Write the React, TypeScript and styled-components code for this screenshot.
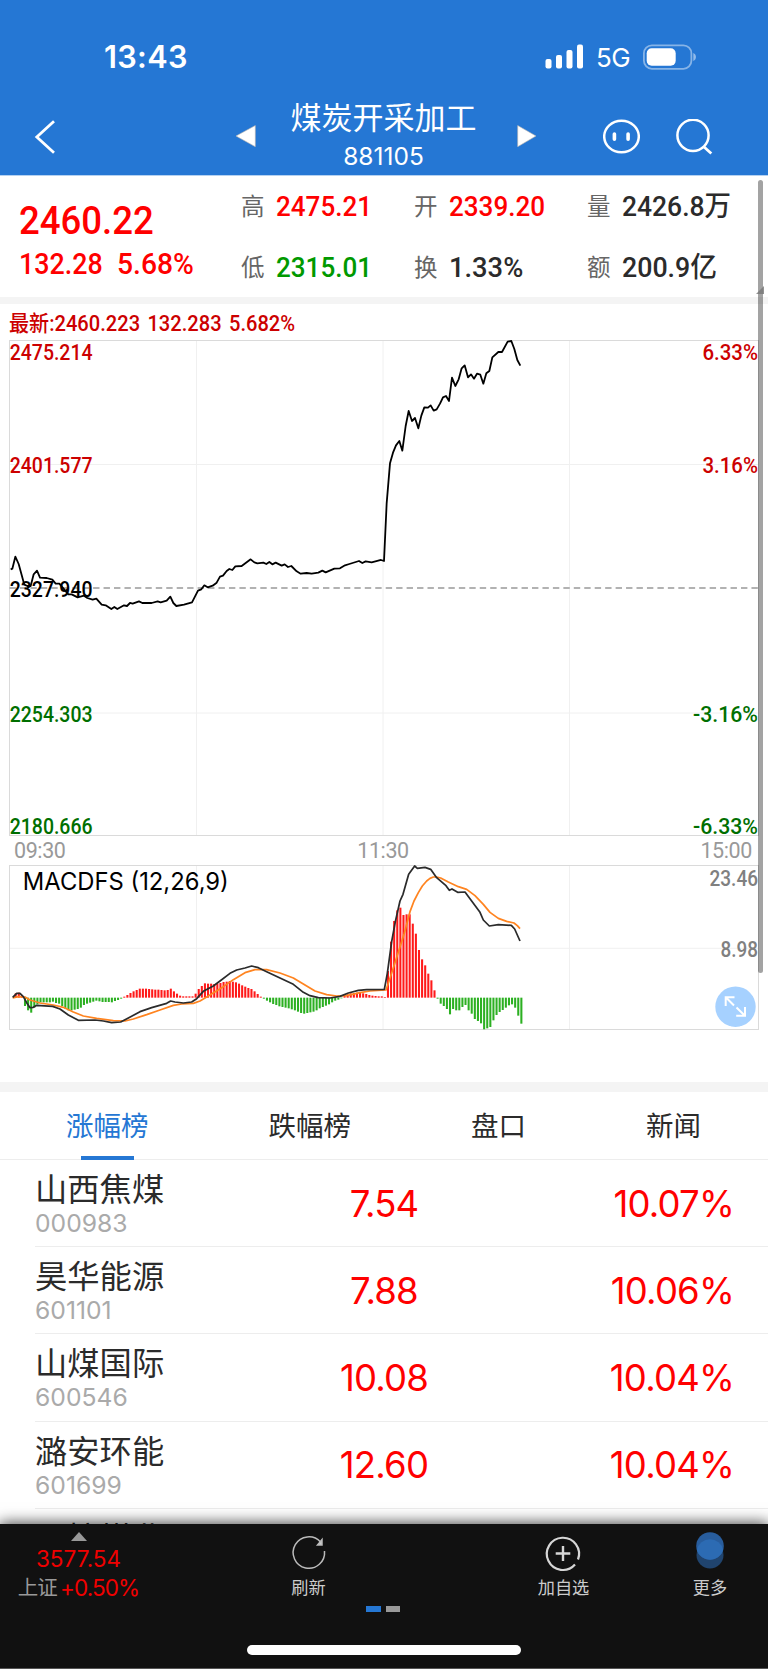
import React from "react";
import styled, { createGlobalStyle } from "styled-components";

const GlobalStyle = createGlobalStyle`
  * { box-sizing: border-box; }
  body { margin: 0; background: #fff; }
  svg { display: block; }
`;

const RED = "#ff0000";
const BLUE = "#2577d4";

const Page = styled.main`
  position: relative;
  display: flex;
  flex-direction: column;
  width: 768px;
  height: 1669px;
  overflow: hidden;
  background: #fff;
  color: #2b2b2b;
  font-family: Inter, "Noto Sans CJK SC", sans-serif;
`;

const Header = styled.header`
  flex: none;
  height: 176px;
  background: ${BLUE};
  border-bottom: 1px solid #b4d1f1;
  color: #fff;
`;

const StatusBar = styled.div`
  display: flex;
  align-items: center;
  height: 100px;
  padding: 13px 71px 0 104px;
`;

const Clock = styled.span`
  flex: 1;
  font-size: 30.7px;
  font-weight: 600;
  letter-spacing: 0.3px;
`;

const Network = styled.span`
  flex: none;
  width: 59px;
  padding: 2px 0 0 12px;
  font-size: 26px;
  line-height: 30px;
  letter-spacing: -0.6px;
`;

const Nav = styled.nav`
  display: grid;
  grid-template-columns: 236px 20px 261px 19px 1fr;
  align-items: center;
  height: 75px;
`;

const Back = styled.div`
  padding: 0 0 1px 34px;
`;

const Arrow = styled.svg`
  margin-bottom: 3px;
`;

const Title = styled.div`
  padding-right: 6px;
  text-align: center;
`;

const TitleName = styled.div`
  font-size: 31px;
  line-height: 36px;
  font-weight: 400;
  white-space: nowrap;
`;

const TitleCode = styled.div`
  padding-top: 1px;
  font-size: 24.5px;
  line-height: 38px;
`;

const NavActions = styled.div`
  display: flex;
  align-items: center;
  gap: 36px;
  padding: 0 0 1px 67px;
`;

const Quote = styled.section`
  flex: none;
  display: flex;
  height: 121px;
  font-family: Roboto, "Noto Sans CJK SC", sans-serif;
  font-weight: 500;
`;

const PriceBox = styled.div`
  width: 241px;
  padding: 22px 0 0 19px;
  color: ${RED};
  white-space: nowrap;
`;

const Digits = styled.span<{ $squeeze: number }>`
  display: inline-block;
  transform: scaleX(${(p) => p.$squeeze});
  transform-origin: left center;
  white-space: pre;
`;

const Price = styled.div`
  font-size: 39.5px;
  line-height: 45px;
`;

const Change = styled.div`
  display: grid;
  grid-template-columns: 98px 1fr;
  font-size: 29px;
  line-height: 42px;
`;

const Stats = styled.div`
  display: grid;
  grid-template-columns: repeat(3, 173px);
  grid-template-rows: 61px 61px;
`;

const Stat = styled.div<{ $color: string }>`
  display: grid;
  grid-template-columns: 35px 1fr;
  align-items: center;
  font-size: 28px;
  line-height: 60px;
  color: ${(p) => p.$color};
  white-space: nowrap;
`;

const StatLabel = styled.span`
  color: #666;
  font-size: 23.5px;
  font-weight: 400;
`;

const Band = styled.div<{ $h: number }>`
  flex: none;
  height: ${(p) => p.$h}px;
  background: #f4f4f4;
`;

const Latest = styled.div`
  flex: none;
  height: 36px;
  padding: 0 0 0 9px;
  font-family: Roboto, "Noto Sans CJK SC", sans-serif;
  font-size: 21.5px;
  font-weight: 500;
  line-height: 39px;
  color: #cc0000;
  word-spacing: -1.4px;
`;

const ChartSvg = styled.svg`
  flex: none;
`;

const TimeAxis = styled.div`
  flex: none;
  display: flex;
  justify-content: space-between;
  height: 29px;
  padding: 0 16px 0 14px;
  font-family: Roboto, sans-serif;
  font-size: 21.5px;
  line-height: 30px;
  color: #999;
  letter-spacing: -0.4px;
`;

const MacdPanel = styled.section`
  flex: none;
  position: relative;
  height: 217px;
`;

const Expand = styled.div`
  position: absolute;
  left: 715px;
  top: 121px;
`;

const Tabs = styled.div`
  flex: none;
  display: flex;
  gap: 120px;
  height: 68px;
  padding-left: 66px;
  border-bottom: 1px solid #ededed;
`;

const Tab = styled.div<{ $active?: boolean }>`
  display: flex;
  flex-direction: column;
  align-items: center;
  font-size: 27.5px;
  line-height: 64px;
  height: 67px;
  padding-top: 2px;
  white-space: nowrap;
  color: ${(p) => (p.$active ? BLUE : "#2b2b2b")};
  &::after {
    content: "";
    flex: none;
    width: 53px;
    height: 4px;
    margin-top: -2px;
    background: ${(p) => (p.$active ? BLUE : "transparent")};
  }
`;

const List = styled.section`
  flex: 1;
  min-height: 0;
  overflow: hidden;
`;

const Row = styled.div`
  display: grid;
  grid-template-columns: 249px 200px 250px;
  align-items: center;
  height: 87.2px;
  margin-left: 35px;
  border-bottom: 1px solid #ededed;
`;

const StockName = styled.div`
  font-size: 32.3px;
  line-height: 37px;
  padding-top: 4px;
`;

const StockCode = styled.div`
  font-size: 24.7px;
  line-height: 31px;
  color: #aaa;
`;

const Value = styled.div<{ $align: string }>`
  padding-top: 1px;
  font-size: 36.5px;
  letter-spacing: -0.8px;
  color: ${RED};
  text-align: ${(p) => p.$align};
`;

const BottomBar = styled.footer`
  flex: none;
  position: relative;
  height: 145px;
  background: #111;
  border-bottom: 1px solid #555;
  box-shadow: 0 0 14px 1px rgba(0, 0, 0, 0.75);
  color: #ccc;
`;

const Tools = styled.div`
  display: grid;
  grid-template-columns: 157px 303px 207px 86px;
  height: 80px;
`;

const IndexTool = styled.div`
  display: flex;
  flex-direction: column;
  align-items: center;
  padding-top: 8px;
  font-size: 22.5px;
  color: #f00000;
  white-space: nowrap;
`;

const IndexValue = styled.div`
  line-height: 31px;
  margin-top: 2px;
`;

const IndexChange = styled.div`
  display: flex;
  gap: 3px;
  line-height: 28px;
  letter-spacing: -0.9px;
`;

const IndexName = styled.span`
  color: #999;
  font-size: 20.5px;
`;

const Tool = styled.div`
  display: flex;
  flex-direction: column;
  align-items: center;
  justify-self: center;
  padding-top: 8px;
  font-size: 17.2px;
  line-height: 27px;
`;

const Pager = styled.div`
  display: flex;
  gap: 5px;
  padding: 2px 0 0 366px;
`;

const PagerDot = styled.span<{ $active?: boolean }>`
  width: 14.5px;
  height: 6px;
  background: ${(p) => (p.$active ? BLUE : "#999")};
`;

const HomeIndicator = styled.div`
  width: 274px;
  height: 10px;
  margin: 33px 0 0 247px;
  border-radius: 5px;
  background: #fff;
`;

const ScrollThumb = styled.div`
  position: absolute;
  left: 757.5px;
  top: 180px;
  width: 5.5px;
  height: 793px;
  border-radius: 3px;
  background: rgba(0, 0, 0, 0.36);
`;

const Corner = styled.svg`
  position: absolute;
  left: 756px;
  top: 286px;
`;

// Chart geometry is stored at three units per pixel.
const PRICE =
  "32,718 37,716 46,680 56,702 65,735 73,764 82,768 92,768 101,733 111,722 120,743 140,744 157,749 167,761 178,761 190,775 205,793 215,793 233,802 252,797 262,804 278,809 289,806 305,824 317,826 334,837 343,831 352,837 372,826 381,828 390,819 398,821 417,814 427,819 455,819 473,814 482,817 500,812 511,800 520,819 529,828 552,824 576,817 594,782 604,778 613,766 623,772 638,767 650,758 660,740 669,737 680,723 688,717 697,720 706,709 725,708 752,688 763,697 772,700 790,698 799,702 808,696 817,703 827,698 845,707 854,703 864,711 874,708 890,724 902,731 920,729 935,731 955,728 967,722 977,727 1003,716 1020,715 1035,706 1048,702 1077,693 1087,699 1097,694 1115,697 1143,690 1152,693 1160,520 1170,400 1179,368 1188,346 1198,333 1207,362 1217,288 1226,243 1236,273 1245,264 1255,295 1264,257 1273,232 1284,233 1292,226 1301,242 1310,238 1320,221 1329,202 1338,198 1347,213 1356,143 1366,168 1376,148 1385,115 1394,106 1404,142 1413,133 1422,146 1431,131 1441,134 1450,161 1459,130 1468,123 1477,82 1495,66 1506,66 1523,35 1534,33 1543,57 1552,90 1561,107";

const DIF =
  "38,892 50,880 60,880 70,890 80,908 90,923 100,922 110,916 158,919 180,927 205,945 235,961 285,960 310,963 335,968 362,966 385,954 420,935 455,923 500,910 512,903 525,906 550,909 575,906 590,896 610,874 640,858 660,843 690,820 710,810 735,804 755,798 775,803 800,815 840,834 880,853 910,877 930,887 955,893 990,894 1020,889 1045,879 1075,871 1100,869 1153,868 1162,820 1175,725 1186,665 1200,603 1209,583 1226,523 1244,498 1252,505 1275,502 1292,508 1310,533 1338,557 1348,571 1356,567 1373,577 1395,576 1415,603 1440,637 1450,660 1468,678 1495,674 1534,676 1544,687 1560,723";

const DEA =
  "38,894 55,890 75,891 90,900 120,909 160,915 190,922 220,936 250,948 290,955 340,962 375,963 400,957 440,944 480,930 520,916 545,912 580,910 600,903 630,885 670,860 700,839 735,818 765,809 800,809 840,819 880,834 910,852 945,873 980,884 1010,888 1040,887 1080,878 1110,873 1158,870 1165,850 1185,788 1213,700 1230,635 1242,603 1255,578 1267,558 1280,543 1290,535 1300,531 1310,531 1322,534 1345,546 1375,560 1400,568 1425,587 1450,613 1470,637 1495,655 1520,664 1542,669 1552,677 1560,686";

const BARS = [
  13, 15, 8, -25, -38, -45, -30, -20, -14, -14, -14, -14, -12, -16, -18, -25, -33, -38, -38, -36,
  -34, -30, -22, -18, -15, -12, -9, -11, -13, -13, -13, -14, -10, -7, -3, 3, 8, 14, 19, 23, 27, 27,
  27, 26, 25, 24, 24, 23, 22, 23, 27, 19, 12, 6, 4, 4, 4, 4, 12, 26, 35, 43, 42, 42, 41, 42, 44, 47,
  48, 50, 48, 46, 42, 37, 33, 29, 26, 19, 11, 3, -3, -9, -14, -19, -22, -26, -28, -30, -32, -35,
  -38, -42, -46, -48, -46, -44, -42, -38, -32, -28, -24, -20, -14, -9, -6, -2, 6, 10, 13, 14, 15,
  15, 13, 11, 8, 6, 5, 4, 4, 2, 80, 168, 230, 262, 270, 248, 250, 250, 222, 192, 143, 115, 97, 72,
  52, 22, -3, -18, -25, -34, -50, -34, -38, -38, -28, -22, -38, -48, -64, -70, -77, -95, -92, -88,
  -68, -52, -43, -37, -30, -23, -20, -30, -54, -78,
];
const BAR_STEP = (1564 - 47) / (BARS.length - 1);

type LabelProps = { y: number; color: string; children: string; width: number; right?: boolean };

const AxisLabel = ({ y, color, children, width, right }: LabelProps) => (
  <text
    x={right ? 758 - width : 9.7}
    y={y}
    fill={color}
    fontFamily="Roboto, sans-serif"
    fontWeight={500}
    fontSize={21.3}
    textLength={width}
    lengthAdjust="spacingAndGlyphs"
  >
    {children}
  </text>
);

const Grid = ({ h, lines }: { h: number; lines: number[] }) => (
  <g fill="none">
    {[196.5, 383, 569.5].map((x) => (
      <path key={x} d={`M${x} 0V${h}`} stroke="#f0f0f0" />
    ))}
    {lines.map((y) => (
      <path key={y} d={`M9.5 ${y}H758`} stroke="#f0f0f0" />
    ))}
    <rect x={9.5} y={0.5} width={749} height={h - 1} stroke="#dadada" />
  </g>
);

const PriceChart = () => (
  <ChartSvg width={768} height={496} viewBox="0 0 768 496">
    <Grid h={496} lines={[124.5, 373]} />
    <path d="M9.5 248H758" stroke="#999" strokeWidth={1.3} strokeDasharray="6.4 4.05" />
    <polyline
      transform="translate(0 -10) scale(.33333)"
      points={PRICE}
      fill="none"
      stroke="#000"
      strokeWidth={5.4}
      strokeLinejoin="round"
    />
    <AxisLabel y={20.4} width={82.9} color="#cc0000">2475.214</AxisLabel>
    <AxisLabel y={133.4} width={82.9} color="#cc0000">2401.577</AxisLabel>
    <AxisLabel y={257.3} width={82.9} color="#000">2327.940</AxisLabel>
    <AxisLabel y={382} width={82.9} color="#006f00">2254.303</AxisLabel>
    <AxisLabel y={494} width={82.9} color="#006f00">2180.666</AxisLabel>
    <AxisLabel y={20.4} width={55.5} color="#cc0000" right>6.33%</AxisLabel>
    <AxisLabel y={133.4} width={55.5} color="#cc0000" right>3.16%</AxisLabel>
    <AxisLabel y={382} width={65} color="#006f00" right>-3.16%</AxisLabel>
    <AxisLabel y={494} width={65} color="#006f00" right>-6.33%</AxisLabel>
  </ChartSvg>
);

const MacdChart = () => (
  <ChartSvg width={768} height={165} viewBox="0 0 768 165">
    <Grid h={165} lines={[83.3]} />
    <g transform="translate(0 -165) scale(.33333)">
      {BARS.map((v, i) => (
        <rect
          key={i}
          x={44 + i * BAR_STEP}
          y={v > 0 ? 893 - v : 893}
          width={6.2}
          height={Math.abs(v)}
          fill={v > 0 ? "#ff1a1a" : "#2cb022"}
        />
      ))}
      <g fill="none" strokeWidth={5.2} strokeLinejoin="round">
        <polyline points={DEA} stroke="#ff8420" />
        <polyline points={DIF} stroke="#2b2b2b" />
      </g>
    </g>
    <text
      x={22.8}
      y={24.6}
      fontFamily="Inter, sans-serif"
      fontSize={24}
      textLength={206}
      lengthAdjust="spacingAndGlyphs"
    >
      MACDFS (12,26,9)
    </text>
    <AxisLabel y={21} width={48.5} color="#808080" right>23.46</AxisLabel>
    <AxisLabel y={91.5} width={37.5} color="#808080" right>8.98</AxisLabel>
  </ChartSvg>
);

const STATS = [
  { label: "高", value: "2475.21", color: RED, squeeze: 0.93 },
  { label: "开", value: "2339.20", color: RED, squeeze: 0.93 },
  { label: "量", value: "2426.8万", color: "#2b2b2b", squeeze: 0.945 },
  { label: "低", value: "2315.01", color: "#009900", squeeze: 0.93 },
  { label: "换", value: "1.33%", color: "#2b2b2b", squeeze: 0.975 },
  { label: "额", value: "200.9亿", color: "#2b2b2b", squeeze: 0.955 },
];

const STOCKS = [
  { name: "山西焦煤", code: "000983", price: "7.54", change: "10.07%" },
  { name: "昊华能源", code: "601101", price: "7.88", change: "10.06%" },
  { name: "山煤国际", code: "600546", price: "10.08", change: "10.04%" },
  { name: "潞安环能", code: "601699", price: "12.60", change: "10.04%" },
  { name: "晋控煤业", code: "", price: "", change: "" },
];

export default function App() {
  return (
    <Page>
      <GlobalStyle />
      <Header>
        <StatusBar>
          <Clock>13:43</Clock>
          <svg width="39" height="25" viewBox="0 0 39 25" fill="#fff">
            <rect x="0.5" y="15" width="6" height="9.5" rx="2" />
            <rect x="11" y="11" width="6" height="13.5" rx="2" />
            <rect x="21.5" y="6" width="6" height="18.5" rx="2" />
            <rect x="32" y="0.5" width="6" height="24" rx="2" />
          </svg>
          <Network>5G</Network>
          <svg width="54" height="26" viewBox="0 0 54 26">
            <rect x="0.9" y="1.3" width="47.5" height="23.5" rx="8" fill="none" stroke="#fff" strokeOpacity=".45" strokeWidth="1.8" />
            <rect x="3.7" y="4.2" width="29" height="17.6" rx="5" fill="#fff" />
            <path d="M50.3 9C53.8 10.2 53.8 15.8 50.3 17Z" fill="#fff" fillOpacity=".5" />
          </svg>
        </StatusBar>
        <Nav>
          <Back>
            <svg width="22" height="34" viewBox="0 0 22 34" fill="none" stroke="#fff" strokeWidth="2.8">
              <path d="M20 1.2L2.8 17L20 32.8" />
            </svg>
          </Back>
          <Arrow width="20" height="22" viewBox="0 0 20 22">
            <path d="M19.3 .5V21.7L0 11Z" fill="#fff" stroke="#b9b3ae" strokeWidth=".6" />
          </Arrow>
          <Title>
            <TitleName>煤炭开采加工</TitleName>
            <TitleCode>881105</TitleCode>
          </Title>
          <Arrow width="20" height="22" viewBox="0 0 20 22">
            <path d="M.7 .5V21.7L19 11Z" fill="#fff" stroke="#b9b3ae" strokeWidth=".6" />
          </Arrow>
          <NavActions>
            <svg width="37" height="36" viewBox="0 0 37 36" fill="none" stroke="#fff">
              <ellipse cx="18.5" cy="17.5" rx="17.3" ry="15.8" strokeWidth="2.5" />
              <path d="M11.4 15V20.3M25.1 15V20.3" strokeWidth="3.6" strokeLinecap="round" />
            </svg>
            <svg width="38" height="36" viewBox="0 0 38 36" fill="none" stroke="#fff" strokeWidth="2.5">
              <circle cx="17" cy="16.3" r="15.6" />
              <path d="M27.5 27.5L35.3 34.5" strokeWidth="2.8" />
            </svg>
          </NavActions>
        </Nav>
      </Header>

      <Quote>
        <PriceBox>
          <Price><Digits $squeeze={0.925}>2460.22</Digits></Price>
          <Change>
            <Digits $squeeze={0.925}>132.28</Digits>
            <Digits $squeeze={0.975}>5.68%</Digits>
          </Change>
        </PriceBox>
        <Stats>
          {STATS.map((s) => (
            <Stat key={s.label} $color={s.color}>
              <StatLabel>{s.label}</StatLabel>
              <Digits $squeeze={s.squeeze}>{s.value}</Digits>
            </Stat>
          ))}
        </Stats>
      </Quote>
      <Band $h={7} />

      <Latest><Digits $squeeze={0.935}>最新:2460.223  132.283  5.682%</Digits></Latest>
      <PriceChart />
      <TimeAxis>
        <span>09:30</span>
        <span>11:30</span>
        <span>15:00</span>
      </TimeAxis>
      <MacdPanel>
        <MacdChart />
        <Expand>
          <svg width="41" height="41" viewBox="0 0 41 41" fill="none" stroke="#fff" strokeWidth="2">
            <circle cx="20.5" cy="20.7" r="20.2" fill="#a6d1ff" stroke="none" />
            <path d="M10.7 20V11.2H19.5M11 11.5L19 19.5M21.2 29.8H30V21M29.7 29.5L21.5 21.5" />
          </svg>
        </Expand>
      </MacdPanel>
      <Band $h={10} />

      <Tabs>
        <Tab $active>涨幅榜</Tab>
        <Tab>跌幅榜</Tab>
        <Tab>盘口</Tab>
        <Tab>新闻</Tab>
      </Tabs>
      <List>
        {STOCKS.map((s) => (
          <Row key={s.name}>
            <div>
              <StockName>{s.name}</StockName>
              <StockCode>{s.code || "\u00a0"}</StockCode>
            </div>
            <Value $align="center">{s.price}</Value>
            <Value $align="right">{s.change}</Value>
          </Row>
        ))}
      </List>

      <BottomBar>
        <Tools>
          <IndexTool>
            <svg width="16" height="9" viewBox="0 0 16 9"><path d="M8 0L16 9H0Z" fill="#999" /></svg>
            <IndexValue>3577.54</IndexValue>
            <IndexChange><IndexName>上证</IndexName>+0.50%</IndexChange>
          </IndexTool>
          <Tool>
            <svg width="42" height="42" viewBox="0 0 42 42" fill="none" stroke="#bbb" strokeWidth="1.5">
              <path d="M36.5 19A15.7 15.7 0 1 1 32.5 10" />
              <path d="M34 7.5V13H29.5Z" fill="#ccc" />
            </svg>
            刷新
          </Tool>
          <Tool>
            <svg width="42" height="42" viewBox="0 0 42 42" fill="none" stroke="#d6d6d6" strokeWidth="2.2">
              <path d="M33 32.5A16.1 16.1 0 1 1 36 27.5" />
              <path d="M21 14V29M13.7 21.5H28.3" strokeWidth="2.4" />
            </svg>
            加自选
          </Tool>
          <Tool>
            <svg width="42" height="42" viewBox="0 0 42 42">
              <circle cx="21" cy="23" r="13.5" fill="#20446e" />
              <circle cx="21" cy="14" r="13.8" fill="#285d9d" />
              <path d="M7.8 18A13.5 13.5 0 0 1 34.2 18A13.8 13.8 0 0 1 7.8 18Z" fill="#2c6bb3" />
            </svg>
            更多
          </Tool>
        </Tools>
        <Pager>
          <PagerDot $active />
          <PagerDot />
        </Pager>
        <HomeIndicator />
      </BottomBar>
      <ScrollThumb />
      <Corner width="8" height="8" viewBox="0 0 8 8"><path d="M8 0V8H0Z" fill="#777" fillOpacity=".8" /></Corner>
    </Page>
  );
}
